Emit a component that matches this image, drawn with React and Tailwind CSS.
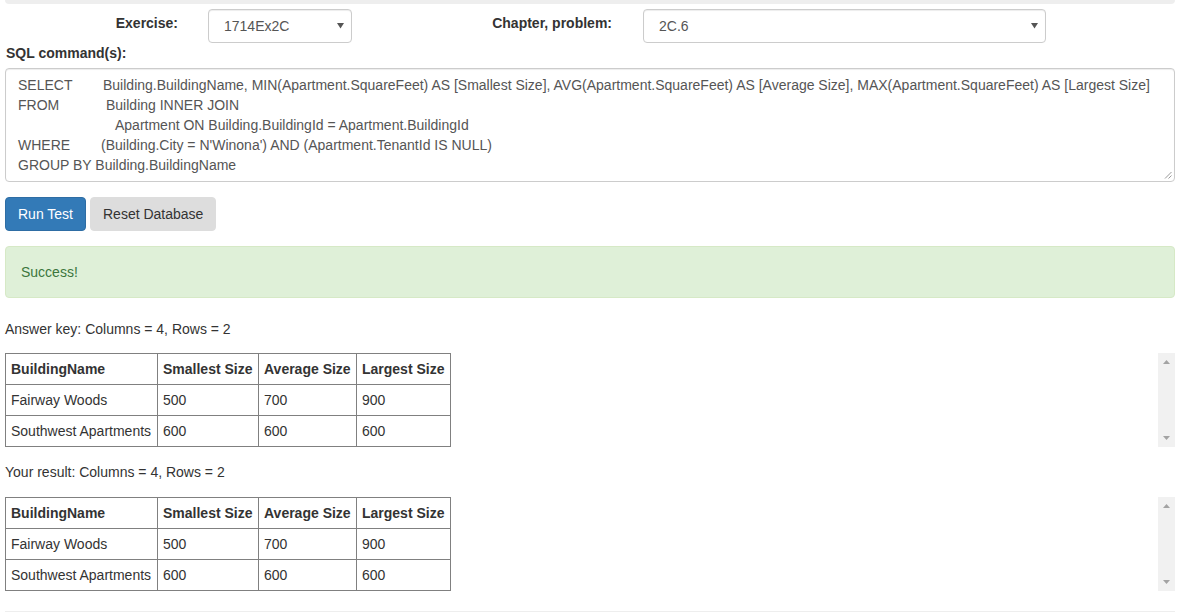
import React from 'react';

const font = { fontFamily: '"Liberation Sans", Arial, Helvetica, sans-serif' };

const rows = [
  ['Fairway Woods', '500', '700', '900'],
  ['Southwest Apartments', '600', '600', '600'],
];

function Select({ value, width }) {
  return (
    <div className={`relative flex h-[34px] items-center rounded-[4px] border border-[#ccc] bg-white pl-[15px] text-[14px] text-[#555] shadow-[inset_0_1px_1px_rgba(0,0,0,0.075)] ${width}`}>
      <span>{value}</span>
      <svg className="absolute right-[7px] top-[13px]" width="7" height="6" viewBox="0 0 7 6">
        <path d="M0 0 H7 L3.5 5.5 Z" fill="#555" />
      </svg>
    </div>
  );
}

function ResultTable() {
  return (
    <div className="flex">
      <table className="w-[445px] table-fixed border-collapse text-[14px] leading-[20px] text-[#333]">
        <colgroup>
          <col className="w-[152px]" />
          <col className="w-[101px]" />
          <col className="w-[98px]" />
          <col className="w-[94px]" />
        </colgroup>
        <thead>
          <tr>
            {['BuildingName', 'Smallest Size', 'Average Size', 'Largest Size'].map((h) => (
              <th key={h} className="h-[31px] whitespace-nowrap border border-[#808080] px-[5px] text-left font-bold">{h}</th>
            ))}
          </tr>
        </thead>
        <tbody>
          {rows.map((r) => (
            <tr key={r[0]}>
              {r.map((c, i) => (
                <td key={i} className="h-[31px] whitespace-nowrap border border-[#808080] px-[5px]">{c}</td>
              ))}
            </tr>
          ))}
        </tbody>
      </table>
      <div className="flex-1" />
      {/* fake vertical scrollbar */}
      <div className="flex w-[17px] flex-col items-center justify-between bg-[#f1f1f1] py-[7px]">
        <svg width="7" height="4" viewBox="0 0 7 4"><path d="M0 4 H7 L3.5 0 Z" fill="#a3a3a3" /></svg>
        <svg width="7" height="4" viewBox="0 0 7 4"><path d="M0 0 H7 L3.5 4 Z" fill="#a3a3a3" /></svg>
      </div>
    </div>
  );
}

export default function App() {
  return (
    <div className="min-h-[615px] bg-white px-[5px] pr-[15px] text-[14px] leading-[20px] text-[#333]" style={font}>
      <div className="h-[4px] rounded-b-[6px] bg-[#eee]" />

      {/* exercise / chapter selectors */}
      <div className="mt-[5px] flex">
        <div className="mt-[4px] w-[173px] text-right font-bold">Exercise:</div>
        <div className="ml-[30px]">
          <Select value="1714Ex2C" width="w-[144px]" />
        </div>
        <div className="mt-[4px] w-[260px] text-right font-bold">Chapter, problem:</div>
        <div className="ml-[31px]">
          <Select value="2C.6" width="w-[403px]" />
        </div>
      </div>

      <div className="mb-[5px] pl-[1px] font-bold">SQL command(s):</div>
      <div className="relative rounded-[4px] border border-[#ccc] px-[12px] py-[6px] text-[#555] shadow-[inset_0_1px_1px_rgba(0,0,0,0.075)] whitespace-nowrap">
        <div><span className="inline-block w-[85px]">SELECT</span>Building.BuildingName, MIN(Apartment.SquareFeet) AS [Smallest Size], AVG(Apartment.SquareFeet) AS [Average Size], MAX(Apartment.SquareFeet) AS [Largest Size]</div>
        <div><span className="inline-block w-[88px]">FROM</span>Building INNER JOIN</div>
        <div className="pl-[97px]">Apartment ON Building.BuildingId = Apartment.BuildingId</div>
        <div><span className="inline-block w-[83px]">WHERE</span>(Building.City = N'Winona') AND (Apartment.TenantId IS NULL)</div>
        <div>GROUP BY Building.BuildingName</div>
        <svg className="absolute bottom-[2px] right-[2px]" width="8" height="8" viewBox="0 0 8 8">
          <path d="M7.5 1 L1 7.5 M7.5 4.5 L4.5 7.5" stroke="#999" strokeWidth="1" />
        </svg>
      </div>

      {/* buttons */}
      <div className="mt-[15px] flex gap-[4px]">
        <button className="h-[34px] rounded-[4px] border border-[#2e6da4] bg-[#337ab7] px-[12px] text-white">Run Test</button>
        <button className="h-[34px] rounded-[4px] border border-[#ddd] bg-[#ddd] px-[12px] text-[#333]">Reset Database</button>
      </div>

      <div className="mt-[15px] rounded-[4px] border border-[#d6e9c6] bg-[#dff0d8] p-[15px] text-[#3c763d]">Success!</div>

      <div className="mt-[21px]">Answer key: Columns = 4, Rows = 2</div>
      <div className="mt-[14px]"><ResultTable /></div>

      <div className="mt-[15px]">Your result: Columns = 4, Rows = 2</div>
      <div className="mt-[15px]"><ResultTable /></div>

      <div className="mt-[20px] border-t border-[#eee]" />
    </div>
  );
}
